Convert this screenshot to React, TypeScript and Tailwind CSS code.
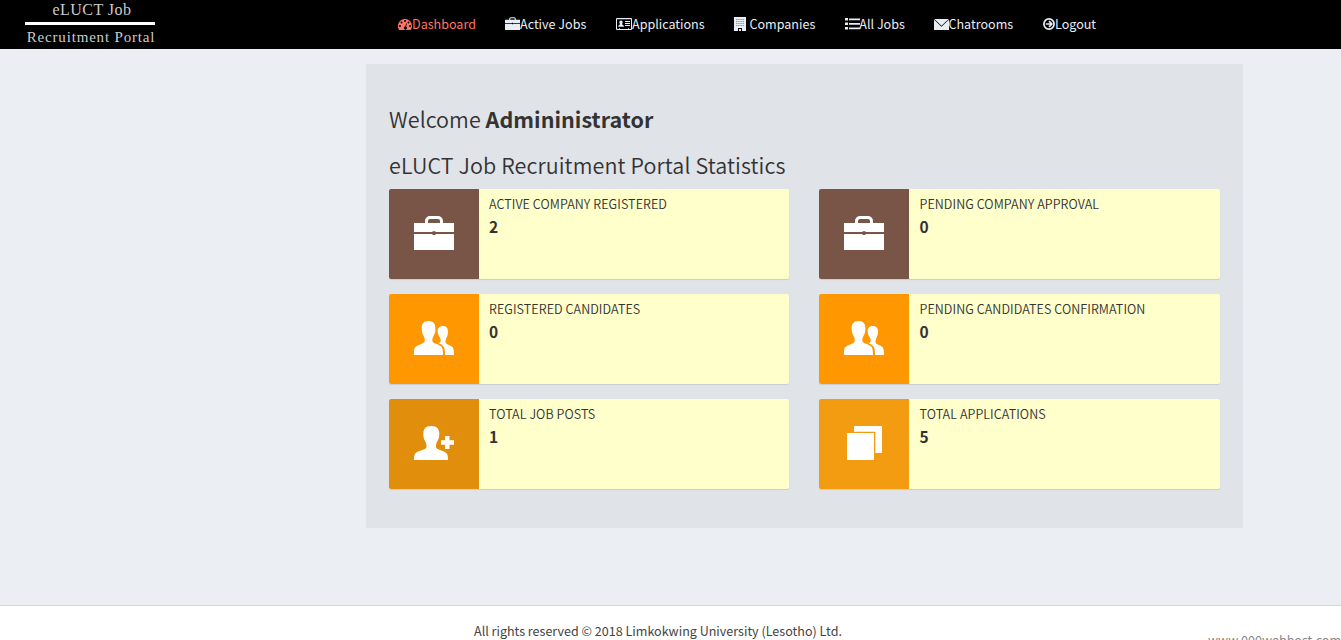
import React from "react";

type IconProps = { className?: string };

function DashboardIcon() {
  return (
    <svg className="mt-px h-[14px] w-[14px] shrink-0" viewBox="0 0 14 14" fill="currentColor">
      <path
        fillRule="evenodd"
        d="M7 1a7 7 0 0 1 7 7c0 1.400-.4 2.700-1.100 3.800-.1.200-.2.200-.4.200H1.500c-.2 0-.3 0-.4-.2A7 7 0 0 1 7 1ZM2 7a1 1 0 1 0 0 2 1 1 0 0 0 0-2Zm1.500-3.500a1 1 0 1 0 0 2 1 1 0 0 0 0-2ZM7 2a1 1 0 1 0 0 2 1 1 0 0 0 0-2Zm3.500 1.500a1 1 0 1 0 0 2 1 1 0 0 0 0-2ZM12 7a1 1 0 1 0 0 2 1 1 0 0 0 0-2ZM8.200 5.200 7.300 8.500a1.500 1.500 0 1 0 .8.200l.8-3.300-.7-.2Z"
      />
    </svg>
  );
}

function BriefcaseIcon({ className }: IconProps) {
  return (
    <svg className={className} viewBox="0 0 40 34" fill="currentColor">
      <path d="M11 7V5a5 5 0 0 1 5-5h8a5 5 0 0 1 5 5v2h11v9H21.500v-.7h-3v.7H0V7h11Zm3 0h12V5a2 2 0 0 0-2-2h-8a2 2 0 0 0-2 2v2Z" />
      <path d="M0 18h18.500v1h3v-1H40v16H0Z" />
    </svg>
  );
}

function IdCardIcon() {
  return (
    <svg className="h-[13px] w-4 shrink-0" viewBox="0 0 16 13" fill="currentColor">
      <path
        fillRule="evenodd"
        d="M1 0h14a1 1 0 0 1 1 1v10a1 1 0 0 1-1 1H1a1 1 0 0 1-1-1V1a1 1 0 0 1 1-1Zm0 1.200V11h2v-.7h1V11h8v-.7h1V11h2V1.200H1Z"
      />
      <path d="M5 2.500c1.200 0 1.700.9 1.600 2-.1 1-.5 1.200-.5 1.700C6.200 7 8 6.800 8 8.800H2.200c0-2 1.700-1.800 1.700-2.600 0-.5-.4-.7-.5-1.700-.1-1.100.4-2 1.600-2ZM9 3h5v1H9ZM9 5h5v1H9ZM9 7h5v1H9Z" />
    </svg>
  );
}

function BuildingIcon() {
  return (
    <svg className="h-[14px] w-3 shrink-0" viewBox="0 0 12 14" fill="currentColor">
      <path d="M0 0h12v14H8v-3H4v3H0Z" />
      <path d="M5 12h2v2H5Z" />
      <path d="M2 2.500h8M2 4.500h8M2 6.500h8M2 8.500h8" stroke="#000" strokeOpacity=".45" strokeWidth=".8" strokeDasharray="1.200 .5" />
    </svg>
  );
}

function ListIcon() {
  return (
    <svg className="h-3 w-[15px] shrink-0" viewBox="0 0 15 12" fill="currentColor">
      <path d="M0 0h3v2.600H0ZM0 4.500h3v2.600H0ZM0 9h3v2.600H0ZM4 .5h11v1.700H4ZM4 5h11v1.700H4ZM4 9.500h11v1.700H4Z" />
    </svg>
  );
}

function EnvelopeIcon() {
  return (
    <svg className="mt-px h-[11px] w-[15px] shrink-0" viewBox="0 0 15 11" fill="currentColor">
      <path d="M.3 0h14.400L7.500 6.800Z" />
      <path d="M0 .5v10.500h15V.5L7.500 7.700Z" />
    </svg>
  );
}

function LogoutIcon() {
  return (
    <svg className="h-3 w-[12px] shrink-0" viewBox="0 0 12 12" fill="none" stroke="currentColor">
      <circle cx="6" cy="6" r="5.100" strokeWidth="1.700" />
      <path d="M2.800 6h5.500M6 3.200 8.800 6 6 8.800" strokeWidth="1.700" />
    </svg>
  );
}

function PeopleIcon({ className }: IconProps) {
  return (
    <svg className={className} viewBox="0 0 40 34" fill="currentColor">
      <path d="M14.500 0c5 0 7.200 3 6.900 8-.1 2-.1 3-.8 4.700-.6 1.500-1.700 2.800-2.100 4.800-.3 1.700-.3 3 .5 3.800 1.500 1.500 5.500 2 8 4C28.600 27 29 29.500 29 34H0c0-4.500 0-6.500 1.500-8 2.500-2.300 6.800-3 8.500-4.500.9-.8.800-2.500.5-4.200-.3-1.800-1.400-3-2-4.600-.6-1.700-.7-2.900-.8-4.700C7.400 3 9.500 0 14.500 0Z" />
      <path d="M28.700 5c4 0 5.500 2.500 5.300 6.300-.2 3.500-1.300 4.700-2 6.600-.5 1.300-.6 3.200-.2 4 .8 1.500 4 2 6 3.500 1.800 1.400 2.200 3.600 2.200 8.600h-9c0-5.500-.5-7.700-2.200-9.300-1.500-1.500-3.300-2-4.500-2.600 2-.4 2.600-1.200 2.400-3.300-.2-2-1.700-2.900-2.300-5-.2-1-.8-2-.8-3C23.500 7.300 25.200 5 28.700 5Z" />
    </svg>
  );
}

function PersonAddIcon({ className }: IconProps) {
  return (
    <svg className={className} viewBox="0 0 40 34" fill="currentColor">
      <path d="M17.300 0c5.800 0 8.200 3.300 8 8.600-.1 1.600-.2 3-.9 4.700-.6 1.500-1.900 3-2.200 4.700-.3 1.600-.4 3.500.4 4.300 1.500 1.500 6 2.200 9 4.200 2.200 1.500 2.400 4 2.400 7.500H0c0-3.500.2-6 2.400-7.500 3-2 8-2.700 9.500-4.200.8-.8.7-2.700.4-4.300-.3-1.700-1.500-3.200-2.100-4.700-.7-1.700-.8-3.100-.9-4.700C9 3.300 11.500 0 17.300 0Z" />
      <path d="M31 10h4.500v4.300H40v4.500h-4.500V23H31v-4.200h-4v-4.500h4Z" />
    </svg>
  );
}

function WindowsIcon({ className }: IconProps) {
  return (
    <svg className={className} viewBox="0 0 40 34" fill="currentColor">
      <path d="M3 7h27v27H3ZM10 0h28v27h-6.700V5.800H10Z" />
    </svg>
  );
}

const navItems = [
  { label: "Dashboard", icon: <DashboardIcon />, box: "w-[107px] text-[#fd7564]" },
  { label: "Active Jobs", icon: <BriefcaseIcon className="-mt-px h-[13px] w-[15px] shrink-0" />, box: "w-[111px]" },
  { label: "Applications", icon: <IdCardIcon />, box: "w-[118px]" },
  { label: "Companies", icon: <BuildingIcon />, box: "w-[111px] gap-[3.500px]" },
  { label: "All Jobs", icon: <ListIcon />, box: "w-[89px] -space-x-[0.700px]" },
  { label: "Chatrooms", icon: <EnvelopeIcon />, box: "w-[109px] -space-x-[0.500px]" },
  { label: "Logout", icon: <LogoutIcon />, box: "w-[80px]" },
];

const stats = [
  { label: "Active Company Registered", value: 2, Icon: BriefcaseIcon, color: "bg-[#795548]" },
  { label: "Pending Company Approval", value: 0, Icon: BriefcaseIcon, color: "bg-[#795548]" },
  { label: "Registered Candidates", value: 0, Icon: PeopleIcon, color: "bg-[#ff9800]" },
  { label: "Pending Candidates Confirmation", value: 0, Icon: PeopleIcon, color: "bg-[#ff9800]" },
  { label: "Total Job Posts", value: 1, Icon: PersonAddIcon, color: "bg-[#e08e0b]" },
  { label: "Total Applications", value: 5, Icon: WindowsIcon, color: "bg-[#f39c12]" },
];

export default function App() {
  return (
    <div className="flex h-[640px] flex-col overflow-hidden bg-[#ebeef3] font-['Noto_Sans_CJK_SC',sans-serif] text-[12.560px] text-[#333]">
      <header className="flex h-[49px] shrink-0 bg-black">
        <div className="flex w-[180px] flex-col items-center font-['Liberation_Serif',serif] text-[#ccc]">
          <span className="h-[22px] pl-1 text-[16px] leading-[20px] tracking-[0.450px] whitespace-nowrap">eLUCT Job</span>
          <span className="h-[3px] w-[130px] bg-white" />
          <span className="pl-0.5 text-[15px] leading-[24px] tracking-[0.820px] whitespace-nowrap">Recruitment Portal</span>
        </div>
        <nav className="ml-[218px] flex h-[48px] items-center text-[#e9edf4]">
          {navItems.map(({ label, icon, box }) => (
            <a key={label} href="#" className={`flex items-center leading-5 whitespace-nowrap ${box}`}>
              {icon}
              <span>{label}</span>
            </a>
          ))}
        </nav>
      </header>

      <main className="h-[556px] shrink-0 pt-[15px] pl-[366px]">
        <section className="h-[464px] w-[877px] bg-[#e0e3e8] px-[23px] pt-[42px]">
          <h3 className="h-[46px] text-[21.500px] leading-[26px] font-[350] tracking-[0.040px]">
            Welcome <b className="font-bold">Admininistrator</b>
          </h3>
          <h3 className="h-[37px] text-[21.500px] leading-[26px] font-[350] tracking-[0.100px]">eLUCT Job Recruitment Portal Statistics</h3>
          <div className="grid grid-cols-[400px_401px] gap-x-[30px] gap-y-[15px]">
            {stats.map(({ label, value, Icon, color }) => (
              <div key={label} className="group flex h-[90px] overflow-hidden rounded-[2px] bg-[#ffffcc] shadow-[0_1px_1px_rgba(0,0,0,0.100)]">
                <div className={`flex w-[90px] items-center justify-center pb-[2px] text-white ${color}`}>
                  <Icon className="h-[34px] w-[40px]" />
                </div>
                <div className="px-[10px] pt-[5px] group-even:pl-[10.500px]">
                  <div className="leading-5 font-[350] tracking-[0.060px] uppercase">{label}</div>
                  <div className="mt-px text-[15.500px] leading-[22px] font-bold">{value}</div>
                </div>
              </div>
            ))}
          </div>
        </section>
      </main>

      <footer className="flex h-[35px] shrink-0 items-start overflow-hidden border-t border-[#d2d6de] bg-white">
        <p className="ml-[474px] w-[734px] pt-[15px] leading-5 whitespace-nowrap text-[#444]">
          All rights reserved © 2018 Limkokwing University (Lesotho) Ltd.
        </p>
        <p className="pt-[24px] leading-5 whitespace-nowrap text-[#888]">www.000webhost.com</p>
      </footer>
    </div>
  );
}
